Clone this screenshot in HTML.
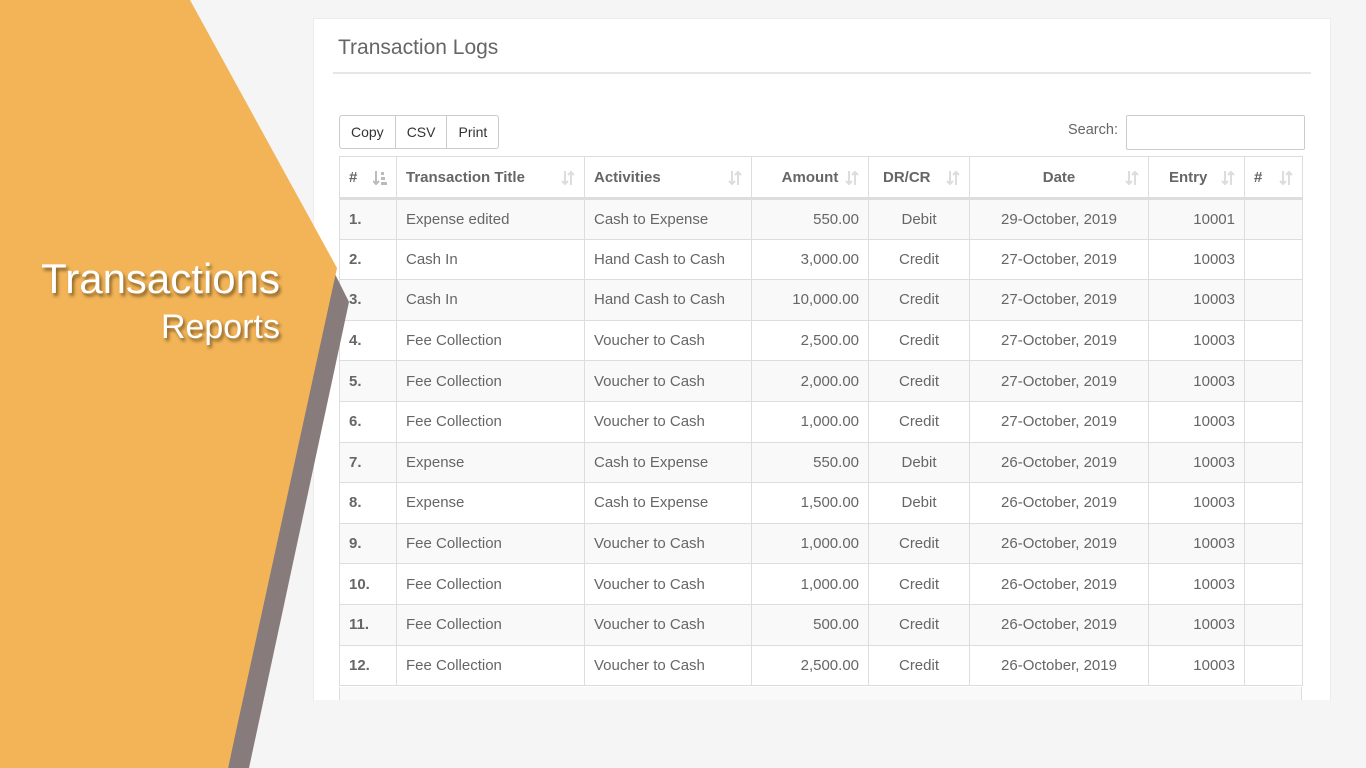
<!DOCTYPE html>
<html><head><meta charset="utf-8"><style>
*{box-sizing:border-box;margin:0;padding:0}
body{width:1366px;height:768px;overflow:hidden;background:#f5f5f5;font-family:"Liberation Sans",sans-serif;position:relative}
.panel{position:absolute;left:313px;top:18px;width:1018px;height:682px;background:#fff;border:1px solid #ececec;border-bottom:none}
.title{position:absolute;left:338px;top:36px;font-size:21px;color:#666}
.hr{position:absolute;left:333px;top:72px;width:978px;height:2px;background:#e6e6e6}
.btns{position:absolute;left:339px;top:115px;height:34px;display:flex;border:1px solid #ccc;border-radius:3px;background:#fff}
.btns div{padding:0 11px;line-height:32px;font-size:14px;color:#333;border-right:1px solid #ccc}
.btns div:last-child{border-right:none}
.search{position:absolute;left:1068px;top:122px;font-size:14.5px;color:#666}
.sbox{position:absolute;left:1126px;top:115px;width:179px;height:35px;border:1px solid #ccc;border-radius:2px}
table{position:absolute;left:339px;top:156px;border-collapse:collapse;table-layout:fixed;width:963px;font-size:15px;color:#666}
td,th{border:1px solid #ddd;height:40.6px;padding:0 9px;white-space:nowrap;overflow:hidden}
th{height:42px;border-bottom:3px solid #ddd;text-align:left;font-weight:bold;color:#666;position:relative}
th svg{position:absolute;right:9px;top:13px}
tr:nth-child(even) td{background:#f9f9f9}
td.n{font-weight:bold}
.r{text-align:right}.c{text-align:center}
.tx{position:absolute;color:#fff;text-shadow:2px 3px 3px rgba(60,40,10,.6)}
</style></head><body>
<div class="panel"></div>
<div class="title">Transaction Logs</div>
<div class="hr"></div>
<div class="btns"><div>Copy</div><div>CSV</div><div>Print</div></div>
<div class="search">Search:</div><div class="sbox"></div>
<table>
<colgroup><col style="width:57px"><col style="width:188px"><col style="width:167px"><col style="width:117px"><col style="width:101px"><col style="width:179px"><col style="width:96px"><col style="width:58px"></colgroup>
<tr>
<th># <svg width="14" height="16"><path d="M3 1v13M0 11l3 3 3-3" stroke="#bbb" stroke-width="2" fill="none"/><rect x="8" y="2" width="3" height="3" fill="#bbb"/><rect x="8" y="7" width="4" height="3" fill="#bbb"/><rect x="8" y="12" width="6" height="3" fill="#bbb"/></svg></th>
<th>Transaction Title<svg width="14" height="16"><path d="M4 1v13M1 11l3 3 3-3M10 15V2M7 5l3-3 3 3" stroke="#ddd" stroke-width="2" fill="none"/></svg></th>
<th>Activities<svg width="14" height="16"><path d="M4 1v13M1 11l3 3 3-3M10 15V2M7 5l3-3 3 3" stroke="#ddd" stroke-width="2" fill="none"/></svg></th>
<th class="c">Amount<svg width="14" height="16"><path d="M4 1v13M1 11l3 3 3-3M10 15V2M7 5l3-3 3 3" stroke="#ddd" stroke-width="2" fill="none"/></svg></th>
<th style="padding-left:14px">DR/CR<svg width="14" height="16"><path d="M4 1v13M1 11l3 3 3-3M10 15V2M7 5l3-3 3 3" stroke="#ddd" stroke-width="2" fill="none"/></svg></th>
<th class="c">Date<svg width="14" height="16"><path d="M4 1v13M1 11l3 3 3-3M10 15V2M7 5l3-3 3 3" stroke="#ddd" stroke-width="2" fill="none"/></svg></th>
<th style="padding-left:20px">Entry<svg width="14" height="16"><path d="M4 1v13M1 11l3 3 3-3M10 15V2M7 5l3-3 3 3" stroke="#ddd" stroke-width="2" fill="none"/></svg></th>
<th>#<svg width="14" height="16"><path d="M4 1v13M1 11l3 3 3-3M10 15V2M7 5l3-3 3 3" stroke="#ddd" stroke-width="2" fill="none"/></svg></th>
</tr>
<tr><td class="n">1.</td><td>Expense edited</td><td>Cash to Expense</td><td class="r">550.00</td><td class="c">Debit</td><td class="c">29-October, 2019</td><td class="r">10001</td><td></td></tr>
<tr><td class="n">2.</td><td>Cash In</td><td>Hand Cash to Cash</td><td class="r">3,000.00</td><td class="c">Credit</td><td class="c">27-October, 2019</td><td class="r">10003</td><td></td></tr>
<tr><td class="n">3.</td><td>Cash In</td><td>Hand Cash to Cash</td><td class="r">10,000.00</td><td class="c">Credit</td><td class="c">27-October, 2019</td><td class="r">10003</td><td></td></tr>
<tr><td class="n">4.</td><td>Fee Collection</td><td>Voucher to Cash</td><td class="r">2,500.00</td><td class="c">Credit</td><td class="c">27-October, 2019</td><td class="r">10003</td><td></td></tr>
<tr><td class="n">5.</td><td>Fee Collection</td><td>Voucher to Cash</td><td class="r">2,000.00</td><td class="c">Credit</td><td class="c">27-October, 2019</td><td class="r">10003</td><td></td></tr>
<tr><td class="n">6.</td><td>Fee Collection</td><td>Voucher to Cash</td><td class="r">1,000.00</td><td class="c">Credit</td><td class="c">27-October, 2019</td><td class="r">10003</td><td></td></tr>
<tr><td class="n">7.</td><td>Expense</td><td>Cash to Expense</td><td class="r">550.00</td><td class="c">Debit</td><td class="c">26-October, 2019</td><td class="r">10003</td><td></td></tr>
<tr><td class="n">8.</td><td>Expense</td><td>Cash to Expense</td><td class="r">1,500.00</td><td class="c">Debit</td><td class="c">26-October, 2019</td><td class="r">10003</td><td></td></tr>
<tr><td class="n">9.</td><td>Fee Collection</td><td>Voucher to Cash</td><td class="r">1,000.00</td><td class="c">Credit</td><td class="c">26-October, 2019</td><td class="r">10003</td><td></td></tr>
<tr><td class="n">10.</td><td>Fee Collection</td><td>Voucher to Cash</td><td class="r">1,000.00</td><td class="c">Credit</td><td class="c">26-October, 2019</td><td class="r">10003</td><td></td></tr>
<tr><td class="n">11.</td><td>Fee Collection</td><td>Voucher to Cash</td><td class="r">500.00</td><td class="c">Credit</td><td class="c">26-October, 2019</td><td class="r">10003</td><td></td></tr>
<tr><td class="n">12.</td><td>Fee Collection</td><td>Voucher to Cash</td><td class="r">2,500.00</td><td class="c">Credit</td><td class="c">26-October, 2019</td><td class="r">10003</td><td></td></tr>
</table>
<div style="position:absolute;left:339px;top:687px;width:963px;height:13px;border-left:1px solid #ddd;border-right:1px solid #ddd;background:#f9f9f9"></div>
<div style="position:absolute;left:0;top:700px;width:1366px;height:68px;background:#f5f5f5"></div>
<svg width="1366" height="768" style="position:absolute;left:0;top:0">
<polygon points="333,270 349,302 249,768 228,768" fill="#877b7b"/>
<polygon points="0,0 190,0 337,268 228,768 0,768" fill="#f2b457"/>
</svg>
<div class="tx" style="right:1086px;top:255px;font-size:42px">Transactions</div>
<div class="tx" style="right:1086px;top:308px;font-size:34px">Reports</div>
</body></html>
